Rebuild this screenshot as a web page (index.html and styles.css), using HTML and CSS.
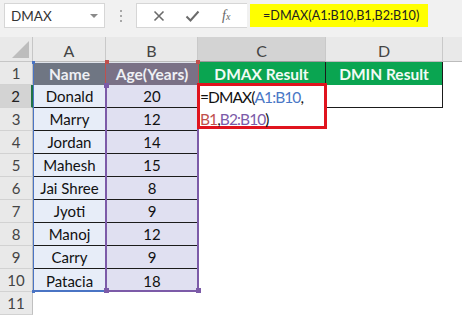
FILE: index.html
```html
<!DOCTYPE html>
<html lang="en">
<head>
    <meta charset="UTF-8">
    <title>DMAX - Sheet</title>
    <link rel="stylesheet" href="styles.css">
</head>
<body>
    <div class="toolbar">
        <div class="name-box">
            <span>DMAX</span>
            <span class="drop"></span>
        </div>
        <div class="grip">
            <span></span><span></span><span></span>
        </div>
        <div class="fx-box">
            <svg class="btn-icon" width="12" height="12" viewBox="0 0 12 12">
                <path d="M1.5 1.5 L10.5 10.5 M10.5 1.5 L1.5 10.5" stroke="#6b6b6b" stroke-width="1.6"/>
            </svg>
            <svg class="btn-icon" width="15" height="12" viewBox="0 0 15 12">
                <path d="M1.5 6.5 L5.5 10.5 L13.5 1.5" stroke="#6b6b6b" stroke-width="2" fill="none"/>
            </svg>
            <span class="fx">f<sub>x</sub></span>
        </div>
        <div class="formula">=DMAX(A1:B10,B1,B2:B10)</div>
    </div>

    <div class="sheet">
        <div class="corner"><span class="tri"></span></div>
        <div class="ch">A</div>
        <div class="ch">B</div>
        <div class="ch ch-active">C</div>
        <div class="ch">D</div>
        <div class="ch ch-last"></div>

        <div class="rh">1</div>
        <div class="cell head-name">Name</div>
        <div class="cell head-age">Age(Years)</div>
        <div class="cell head-res">DMAX Result</div>
        <div class="cell head-res">DMIN Result</div>
        <div class="cell"></div>

        <div class="rh rh-active">2</div>
        <div class="cell nm">Donald</div>
        <div class="cell ag">20</div>
        <div class="cell"></div>
        <div class="cell d-box"></div>
        <div class="cell"></div>

        <div class="rh">3</div>
        <div class="cell nm">Marry</div>
        <div class="cell ag">12</div>
        <div class="cell"></div><div class="cell"></div><div class="cell"></div>

        <div class="rh">4</div>
        <div class="cell nm">Jordan</div>
        <div class="cell ag">14</div>
        <div class="cell"></div><div class="cell"></div><div class="cell"></div>

        <div class="rh">5</div>
        <div class="cell nm">Mahesh</div>
        <div class="cell ag">15</div>
        <div class="cell"></div><div class="cell"></div><div class="cell"></div>

        <div class="rh">6</div>
        <div class="cell nm">Jai Shree</div>
        <div class="cell ag">8</div>
        <div class="cell"></div><div class="cell"></div><div class="cell"></div>

        <div class="rh">7</div>
        <div class="cell nm">Jyoti</div>
        <div class="cell ag">9</div>
        <div class="cell"></div><div class="cell"></div><div class="cell"></div>

        <div class="rh">8</div>
        <div class="cell nm">Manoj</div>
        <div class="cell ag">12</div>
        <div class="cell"></div><div class="cell"></div><div class="cell"></div>

        <div class="rh">9</div>
        <div class="cell nm">Carry</div>
        <div class="cell ag">9</div>
        <div class="cell"></div><div class="cell"></div><div class="cell"></div>

        <div class="rh">10</div>
        <div class="cell nm last">Patacia</div>
        <div class="cell ag last">18</div>
        <div class="cell"></div><div class="cell"></div><div class="cell"></div>

        <div class="rh">11</div>
        <div class="cell"></div><div class="cell"></div><div class="cell"></div><div class="cell"></div><div class="cell"></div>

        <!-- reference outlines drawn over the grid -->
        <div class="ref ref-blue"></div>
        <div class="ref ref-red"></div>
        <div class="ref ref-purple"></div>
        <span class="knob knob-blue" style="left: 32px; top: 24px;"></span>
        <span class="knob knob-blue" style="left: 32px; top: 253px;"></span>
        <span class="knob knob-red" style="left: 105px; top: 23px;"></span>
        <span class="knob knob-red" style="left: 196px; top: 23px;"></span>
        <span class="knob knob-purple" style="left: 104px; top: 46px;"></span>
        <span class="knob knob-purple" style="left: 104px; top: 251px;"></span>
        <span class="knob knob-purple" style="left: 196px; top: 251px;"></span>

        <div class="edit-cell">
            <div>=DMAX(<span class="c-blue">A1:B10</span>,</div>
            <div><span class="c-red">B1</span>,<span class="c-purple">B2:B10</span>)</div>
        </div>
    </div>
</body>
</html>
```

FILE: styles.css
```css
/* Base */
body {
    margin: 0;
    width: 462px;
    height: 315px;
    overflow: hidden;
    background-color: white;
    font-family: Lato, "Liberation Sans", sans-serif;
}

/* Formula bar strip */
.toolbar {
    height: 37px;
    box-sizing: border-box;
    background-color: #f1f1f1;
    display: flex;
    align-items: flex-start;
    padding-top: 3px;
}

.name-box {
    margin-left: 4px;
    width: 101px;
    height: 25px;
    box-sizing: border-box;
    background-color: white;
    border: 1px solid #d6d6d6;
    display: flex;
    align-items: center;
    justify-content: space-between;
    padding: 0 6px 0 6px;
    font-size: 13.5px;
    color: #333;
}

.drop {
    width: 0;
    height: 0;
    border-left: 4px solid transparent;
    border-right: 4px solid transparent;
    border-top: 4px solid #8a8a8a;
}

.grip {
    width: 31px;
    height: 25px;
    display: flex;
    flex-direction: column;
    align-items: center;
    justify-content: center;
    gap: 3px;
}

.grip span {
    width: 2px;
    height: 2px;
    background-color: #a8a8a8;
}

.fx-box {
    width: 111px;
    height: 25px;
    box-sizing: border-box;
    background-color: white;
    border: 1px solid #d6d6d6;
    border-right: none;
    display: flex;
    align-items: center;
    padding-left: 16px;
    gap: 20px;
}

.fx {
    font-family: "Liberation Serif", serif;
    font-style: italic;
    font-size: 14px;
    color: #666;
    margin-left: 2px;
}

.fx sub {
    font-size: 10px;
    vertical-align: 0;
}

.formula {
    margin-left: 3px;
    margin-top: 1px;
    width: 178px;
    height: 23px;
    box-sizing: border-box;
    background-color: #ffff00;
    padding-left: 13px;
    line-height: 23px;
    font-size: 12.6px;
    color: #222;
}

/* Sheet grid */
.sheet {
    position: relative;
    display: grid;
    grid-template-columns: 33px 73px 92px 128px 117px 1fr;
    grid-template-rows: 25px repeat(11, 23px);
}

.corner,
.ch,
.rh {
    background-color: #e9e9e9;
    box-sizing: border-box;
    color: #444;
    display: flex;
    align-items: center;
    justify-content: center;
}

.corner {
    border-right: 1px solid #c6c6c6;
    border-bottom: 1px solid #c6c6c6;
    position: relative;
}

.tri {
    position: absolute;
    right: 3px;
    bottom: 3px;
    width: 0;
    height: 0;
    border-left: 17px solid transparent;
    border-bottom: 17px solid #bdbdbd;
}

.ch {
    font-size: 16px;
    border-right: 1px solid #c9c9c9;
    border-bottom: 1px solid #bcbcbc;
    padding-top: 2px;
}

.ch-active {
    background-color: #d3d3d3;
    border-bottom: 1px solid #9b9b9b;
}

.ch-last {
    border-right: none;
}

.rh {
    font-size: 15px;
    border-right: 1px solid #c0c0c0;
    border-bottom: 1px solid #d2d2d2;
}

.rh-active {
    background-color: #d3d3d3;
    color: #222;
    border-right: 2px solid #217346;
}

.cell {
    box-sizing: border-box;
    display: flex;
    align-items: center;
    justify-content: center;
    font-size: 15px;
    color: #111;
}

.head-name,
.head-age,
.head-res {
    font-weight: bold;
    font-size: 15.5px;
    color: #eef0f4;
}

.head-name {
    background-color: #6f7683;
    border-top: 1px solid #dfe3ea;
}

.head-age {
    background-color: #7a7186;
    border-top: 1px solid #dfe3ea;
}

.head-res {
    background-color: #0aa551;
    color: #f2fbf5;
    border-right: 1px solid #1b1b1b;
}

.nm {
    background-color: #e7edf8;
    border-bottom: 1px solid #1b1b1b;
}

.ag {
    background-color: #e0e0f1;
    border-bottom: 1px solid #1b1b1b;
}

.last {
    border-bottom: none;
}

.d-box {
    border-right: 1px solid #1b1b1b;
    border-bottom: 1px solid #1b1b1b;
}

/* Range highlights */
.ref {
    position: absolute;
    box-sizing: border-box;
    pointer-events: none;
}

.ref-blue {
    left: 33px;
    top: 25px;
    width: 74px;
    height: 230px;
    border-left: 1px solid #4a74c4;
    border-bottom: 2px solid #4a74c4;
}

.ref-red {
    left: 105px;
    top: 25px;
    width: 94px;
    height: 23px;
    border-left: 1px solid #c0504d;
    border-right: 1px solid #c0504d;
}

.ref-purple {
    left: 105px;
    top: 48px;
    width: 94px;
    height: 207px;
    border: 2px solid #7c5ba8;
    border-top: none;
}

.knob {
    position: absolute;
    width: 4px;
    height: 4px;
    box-sizing: border-box;
}

.knob-blue {
    width: 3px;
    height: 3px;
    background-color: #4a74c4;
}

.knob-red {
    background-color: #c0504d;
}

.knob-purple {
    width: 5px;
    height: 5px;
    background-color: #7c5ba8;
}

/* Cell being edited */
.edit-cell {
    position: absolute;
    left: 197px;
    top: 46px;
    width: 130px;
    height: 46px;
    box-sizing: border-box;
    border: 3px solid #e0141e;
    background-color: white;
    padding-left: 0;
    font-size: 15.5px;
    line-height: 22px;
    letter-spacing: -0.9px;
    color: #111;
}

.c-blue {
    color: #4a78c6;
}

.c-red {
    color: #c0504d;
}

.c-purple {
    color: #7c5ba8;
}
```
